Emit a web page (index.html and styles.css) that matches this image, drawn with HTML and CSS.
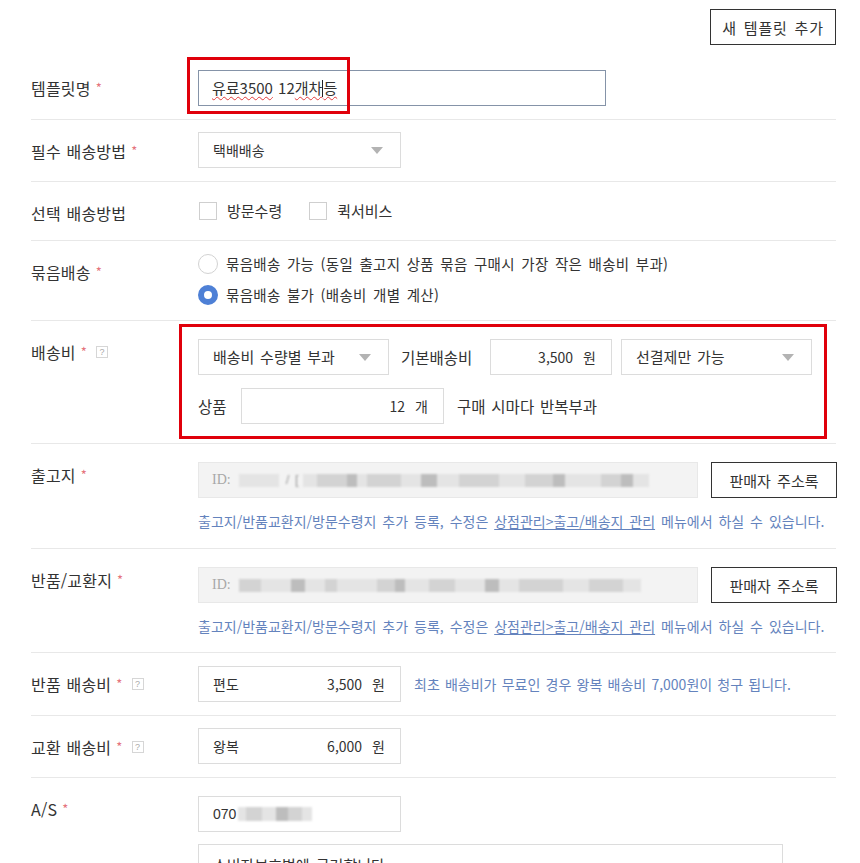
FILE: index.html
```html
<!DOCTYPE html>
<html lang="ko">
<head>
<meta charset="utf-8">
<title>배송비 템플릿</title>
<link rel="stylesheet" href="styles.css">
</head>
<body>
<div class="page">
  <div class="topbar"><button class="btn btn-wide">새 템플릿 추가</button></div>

  <div class="row">
    <div class="label">템플릿명 <span class="req">*</span></div>
    <div class="field pad-13">
      <div class="box focus w-name"><span class="spell">유료3500</span>&nbsp;12<span class="spell">개차<span class="caret"></span>등</span></div>
    </div>
  </div>

  <div class="row">
    <div class="label">필수 배송방법 <span class="req">*</span></div>
    <div class="field pad-12">
      <div class="box select w-203">택배배송<svg class="arrow" width="12" height="7" viewBox="0 0 12 7"><path d="M0 0H12L6 7Z" fill="#b3b3b3"/></svg></div>
    </div>
  </div>

  <div class="row">
    <div class="label">선택 배송방법</div>
    <div class="field pad-12">
      <div class="checks">
        <label class="check"><span class="cb"></span>방문수령</label>
        <label class="check"><span class="cb"></span>퀵서비스</label>
      </div>
    </div>
  </div>

  <div class="row">
    <div class="label">묶음배송 <span class="req">*</span></div>
    <div class="field pad-radios">
      <div class="radio-line"><span class="radio"></span>묶음배송 가능 (동일 출고지 상품 묶음 구매시 가장 작은 배송비 부과)</div>
      <div class="radio-line"><span class="radio on"></span>묶음배송 불가 (배송비 개별 계산)</div>
    </div>
  </div>

  <div class="row">
    <div class="label">배송비 <span class="req">*</span><span class="help">?</span></div>
    <div class="field pad-18 fee">
      <div class="line">
        <div class="box select w-191">배송비 수량별 부과<svg class="arrow" width="12" height="7" viewBox="0 0 12 7"><path d="M0 0H12L6 7Z" fill="#b3b3b3"/></svg></div>
        <span class="inline-text t-base">기본배송비</span>
        <div class="box num w-122"><span class="val">3,500</span><span class="unit">원</span></div>
        <div class="box select w-191 ml-9">선결제만 가능<svg class="arrow" width="12" height="7" viewBox="0 0 12 7"><path d="M0 0H12L6 7Z" fill="#b3b3b3"/></svg></div>
      </div>
      <div class="line gap-top">
        <span class="inline-text t-goods">상품</span>
        <div class="box num w-203"><span class="val">12</span><span class="unit">개</span></div>
        <span class="inline-text t-repeat">구매 시마다 반복부과</span>
      </div>
    </div>
  </div>

  <div class="row">
    <div class="label">출고지 <span class="req">*</span></div>
    <div class="field pad-18b">
      <div class="line">
        <div class="box readonly w-500"><span class="id">ID:</span>
          <span class="mosaic">
            <i class="m1" style="width:40px"></i><b class="sep">/ [</b><i class="m1" style="width:14px"></i><i class="m2" style="width:30px"></i><i class="m3" style="width:10px"></i><i class="m1" style="width:10px"></i><i class="m2" style="width:34px"></i><i class="m1" style="width:20px"></i><i class="m3" style="width:16px"></i><i class="m1" style="width:22px"></i><i class="m2" style="width:40px"></i><i class="m1" style="width:26px"></i><i class="m2" style="width:28px"></i><i class="m3" style="width:12px"></i><i class="m1" style="width:36px"></i><i class="m2" style="width:20px"></i><i class="m3" style="width:12px"></i><i class="m1" style="width:16px"></i>
          </span>
        </div>
        <button class="btn ml-13">판매자 주소록</button>
      </div>
      <p class="note">출고지/반품교환지/방문수령지 추가 등록, 수정은 <u>상점관리&gt;출고/배송지 관리</u> 메뉴에서 하실 수 있습니다.</p>
    </div>
  </div>

  <div class="row">
    <div class="label">반품/교환지 <span class="req">*</span></div>
    <div class="field pad-18c">
      <div class="line">
        <div class="box readonly w-500"><span class="id">ID:</span>
          <span class="mosaic">
            <i class="m2" style="width:22px"></i><i class="m1" style="width:30px"></i><i class="m3" style="width:14px"></i><i class="m1" style="width:20px"></i><i class="m2" style="width:12px"></i><i class="m1" style="width:40px"></i><i class="m2" style="width:18px"></i><i class="m3" style="width:10px"></i><i class="m1" style="width:24px"></i><i class="m2" style="width:26px"></i><i class="m1" style="width:30px"></i><i class="m3" style="width:14px"></i><i class="m1" style="width:20px"></i><i class="m2" style="width:44px"></i><i class="m1" style="width:26px"></i><i class="m2" style="width:34px"></i><i class="m1" style="width:18px"></i>
          </span>
        </div>
        <button class="btn ml-13">판매자 주소록</button>
      </div>
      <p class="note">출고지/반품교환지/방문수령지 추가 등록, 수정은 <u>상점관리&gt;출고/배송지 관리</u> 메뉴에서 하실 수 있습니다.</p>
    </div>
  </div>

  <div class="row">
    <div class="label">반품 배송비 <span class="req">*</span><span class="help">?</span></div>
    <div class="field pad-13">
      <div class="line">
        <div class="box num w-203"><span class="pre">편도</span><span class="val">3,500</span><span class="unit">원</span></div>
        <span class="inline-note">최초 배송비가 무료인 경우 왕복 배송비 7,000원이 청구 됩니다.</span>
      </div>
    </div>
  </div>

  <div class="row">
    <div class="label">교환 배송비 <span class="req">*</span><span class="help">?</span></div>
    <div class="field pad-12">
      <div class="box num w-203"><span class="pre">왕복</span><span class="val">6,000</span><span class="unit">원</span></div>
    </div>
  </div>

  <div class="row last">
    <div class="label">A/S <span class="req">*</span></div>
    <div class="field pad-18">
      <div class="box w-203"><span class="latin">070</span><span class="mosaic small"><i class="m1" style="width:8px"></i><i class="m2" style="width:16px"></i><i class="m1" style="width:14px"></i><i class="m3" style="width:12px"></i><i class="m2" style="width:14px"></i><i class="m1" style="width:10px"></i></span></div>
      <div class="textarea">소비자보호법에 근거합니다</div>
    </div>
  </div>

  <div class="mark mark-name"></div>
  <div class="mark mark-fee"></div>
</div>
</body>
</html>
```
FILE: styles.css
```css
* { box-sizing: border-box; }

html, body {
  margin: 0;
  background: #fff;
}

body {
  font-family: "Noto Sans CJK KR", "Noto Sans", "Liberation Sans", sans-serif;
  font-size: 14px;
  word-spacing: 2px;
  color: #333;
  overflow: hidden;
}

.page {
  position: relative;
  width: 836px;
  padding-left: 31px;
}

.topbar {
  display: flex;
  justify-content: flex-end;
  padding: 9px 0 12px;
}

.btn {
  height: 36px;
  width: 126px;
  border: 1px solid #333;
  background: #fff;
  font-family: inherit;
  font-size: 15px;
  word-spacing: 2px;
  color: #333;
  padding: 0;
  flex: none;
}
.btn-wide { letter-spacing: 0.8px; }

.row {
  display: flex;
  border-bottom: 1px solid #e8e8e8;
}
.row.last { border-bottom: none; }

.label {
  width: 167px;
  flex: none;
  padding-top: 21px;
  line-height: 20px;
  font-size: 16px;
  letter-spacing: 0.2px;
  word-spacing: 1px;
  display: flex;
  align-items: center;
  align-self: flex-start;
  height: 41px;
}

.req {
  color: #e5747c;
  margin-left: 5px;
  font-size: 13px;
}

.help {
  width: 12px;
  height: 12px;
  border: 1px solid #d6d6d6;
  color: #aaa;
  font-size: 9px;
  line-height: 10px;
  text-align: center;
  margin-left: 9px;
  font-family: "Liberation Sans", sans-serif;
  letter-spacing: 0;
}

.field { flex: 1; }
.pad-12 { padding: 12px 0 13px; }
.pad-13 { padding: 13px 0; }
.pad-18 { padding: 18px 0 19px; }
.pad-18b { padding: 18px 0 17px; }
.pad-18c { padding: 18px 0 16px; }
.pad-radios { padding: 10px 0 12px; }

.line {
  display: flex;
  align-items: center;
}
.gap-top { margin-top: 13px; }

.box {
  height: 36px;
  border: 1px solid #dcdcdc;
  display: flex;
  align-items: center;
  padding: 0 14px;
  line-height: 20px;
  background: #fff;
  flex: none;
  white-space: nowrap;
}

.box.focus { border-color: #8593a8; padding-left: 13px; font-size: 15px; word-spacing: 1px; }

.fee { font-size: 15.5px; word-spacing: 1.5px; }
.fee .select { font-size: 15px; }

.w-name { width: 408px; }
.w-203 { width: 203px; }
.w-191 { width: 191px; }
.w-122 { width: 122px; }
.w-500 { width: 500px; }
.ml-9 { margin-left: 9px; }
.ml-13 { margin-left: 13px; }

.spell {
  text-decoration: underline wavy #e23a3a;
  text-decoration-thickness: 1px;
  text-underline-offset: 2px;
}

.caret {
  display: inline-block;
  width: 1px;
  height: 17px;
  background: #222;
  vertical-align: -3px;
}

.select .arrow {
  margin-left: auto;
  margin-right: 3px;
}

.checks {
  height: 33px;
  display: flex;
  align-items: center;
  font-size: 15px;
}
.check {
  display: flex;
  align-items: center;
  line-height: 20px;
  margin-right: 26px;
}
.cb {
  width: 18px;
  height: 18px;
  border: 1px solid #cfcfcf;
  margin: 0 10px 0 1px;
  background: #fff;
}

.radio-line {
  height: 26px;
  display: flex;
  align-items: center;
  line-height: 20px;
  white-space: pre;
  font-size: 14.5px;
  letter-spacing: 0.3px;
}
.radio-line + .radio-line { margin-top: 5px; }

.radio {
  width: 20px;
  height: 20px;
  border-radius: 50%;
  border: 1px solid #d2d2d2;
  margin-right: 8px;
  background: #fff;
  flex: none;
}
.radio.on {
  border: 6px solid #4e80d6;
  background: #fff;
}

.inline-text { line-height: 20px; flex: none; }
.t-base { margin-left: 12px; width: 89px; }
.t-goods { width: 43px; }
.t-repeat { margin-left: 13px; }

.num .val {
  flex: 1;
  text-align: right;
}
.num .unit { margin-left: 10px; margin-right: 1px; }
.num .pre { flex: none; }
.fee .num { font-size: 14px; }

.readonly {
  background: #f3f3f3;
  border-color: #e8e8e8;
  padding-left: 13px;
  overflow: hidden;
}

.id {
  font-family: "Liberation Serif", serif;
  color: #a8a8a8;
  font-size: 14px;
  margin-right: 8px;
}

.mosaic {
  display: flex;
  align-items: center;
  height: 14px;
  filter: blur(1.2px);
}
.mosaic i {
  display: block;
  height: 13px;
  flex: none;
}
.mosaic .m1 { background: #e4e4e4; }
.mosaic .m2 { background: #d3d3d3; }
.mosaic .m3 { background: #bdbdbd; }
.mosaic .sep {
  font-weight: normal;
  color: #999;
  font-family: "Liberation Sans", sans-serif;
  font-size: 13px;
  margin: 0 4px 0 7px;
}
.mosaic.small { margin-left: 2px; }
.mosaic.small i { height: 14px; }

.latin { font-family: "Liberation Sans", sans-serif; font-size: 14px; }

.note {
  margin: 13px 0 0;
  line-height: 20px;
  font-size: 14px;
  color: #6483bd;
  white-space: nowrap;
}
.note u { text-underline-offset: 2px; }

.inline-note {
  margin-left: 13px;
  font-size: 14px;
  word-spacing: 1.3px;
  color: #6483bd;
  line-height: 20px;
  white-space: nowrap;
}

.textarea {
  margin-top: 12px;
  width: 585px;
  height: 80px;
  border: 1px solid #dcdcdc;
  padding: 10px 14px;
  line-height: 20px;
  font-size: 15px;
}

.mark {
  position: absolute;
  border: 3px solid #e0000b;
  pointer-events: none;
}
.mark-name { left: 187px; top: 57px; width: 163px; height: 57px; }
.mark-fee { left: 179px; top: 324px; width: 648px; height: 115px; }
```
